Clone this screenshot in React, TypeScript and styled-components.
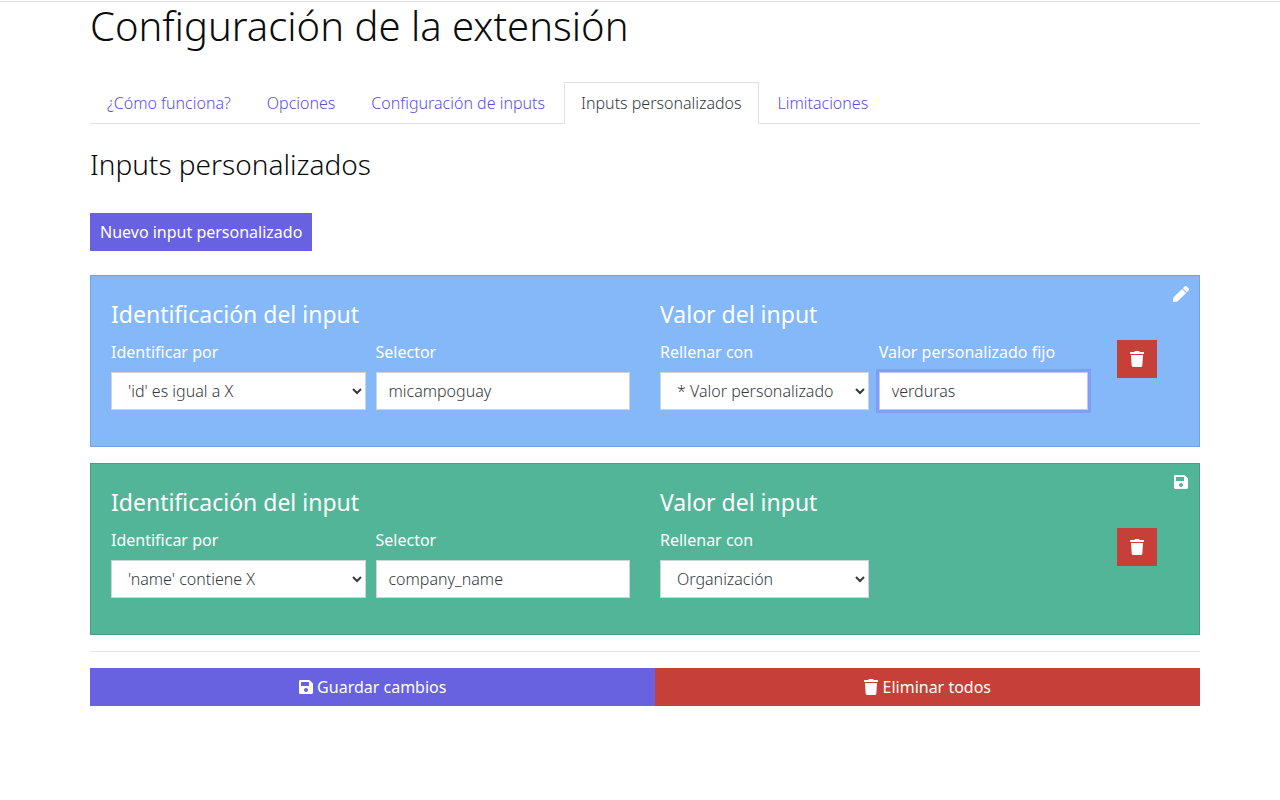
import React from "react";
import styled, { createGlobalStyle, css } from "styled-components";
import { FaPen, FaSave, FaTrash } from "react-icons/fa";

const GlobalStyle = createGlobalStyle`
  *, *::before, *::after {
    box-sizing: border-box;
  }
  body {
    margin: 0;
    background: #fff;
    color: #0b0c0d;
    font-family: "Noto Sans", sans-serif;
    font-size: 16px;
    font-weight: 300;
    line-height: 24px;
  }
  button, input, select {
    font: inherit;
  }
`;

const Page = styled.div`
  margin-top: 1px;
  border-top: 1px solid #dee2e6;
`;

const Container = styled.main`
  padding: 0 80px 40px 90px;
`;

const PageTitle = styled.h1`
  margin: 0 0 32px;
  font-size: 40px;
  font-weight: 300;
  line-height: 48px;
`;

const Tabs = styled.nav`
  display: flex;
  gap: 2px;
  border-bottom: 1px solid #dee2e6;
`;

const Tab = styled.a<{ $active?: boolean }>`
  margin-bottom: -1px;
  padding: 8px 16px;
  border: 1px solid transparent;
  color: #5a4fe0;
  text-decoration: none;
  ${({ $active }) =>
    $active &&
    css`
      border-color: #dee2e6 #dee2e6 #fff;
      background: #fff;
      color: #343a40;
    `}
`;

const SectionTitle = styled.h2`
  margin: 24px 0 32px;
  font-size: 28px;
  font-weight: 300;
  line-height: 33px;
`;

const Button = styled.button<{ $tone: "primary" | "danger" }>`
  padding: 7px 10px;
  border: 0;
  background: ${({ $tone }) => ($tone === "primary" ? "#6861e0" : "#c63f38")};
  color: #fff;
  font-weight: 400;
  line-height: 24px;
  cursor: pointer;

  svg {
    width: 14px;
    height: 16px;
    vertical-align: -2px;
  }
`;

const RemoveButton = styled(Button)`
  width: 40px;
  padding: 7px 0;
`;

const CardList = styled.div`
  display: grid;
  gap: 16px;
  margin-top: 24px;
`;

const Card = styled.form<{ $color: string }>`
  position: relative;
  padding: 20px 20px 24px;
  border: 1px solid rgba(0, 0, 0, 0.125);
  background: ${({ $color }) => $color};
  color: #fff;
  font-weight: 400;
`;

const CardAction = styled.button`
  position: absolute;
  top: 10px;
  right: 10px;
  display: flex;
  padding: 0;
  border: 0;
  background: none;
  color: #fff;
  cursor: pointer;
`;

const CardGrid = styled.div`
  display: grid;
  grid-template-columns: 6fr 5fr 1fr;
  margin: 0 -15px;
`;

const Group = styled.fieldset`
  min-width: 0;
  margin: 0;
  padding: 0 15px 12px;
  border: 0;
`;

const GroupTitle = styled.legend`
  padding: 4px 0 11px;
  font-size: 23px;
  line-height: 29px;
`;

const Fields = styled.div`
  display: grid;
  grid-template-columns: 1fr 1fr;
  gap: 10px;
`;

const Field = styled.div`
  min-width: 0;
`;

const Label = styled.label`
  display: block;
  margin-bottom: 8px;
`;

const controlStyle = css`
  display: block;
  width: 100%;
  height: 38px;
  padding: 6px 12px;
  border: 1px solid #ced4da;
  border-radius: 0;
  background: #fff;
  color: #343a40;
  font-weight: 300;
  outline: 0;
`;

const Select = styled.select`
  ${controlStyle}
`;

const TextInput = styled.input<{ $focused?: boolean }>`
  ${controlStyle}
  ${({ $focused }) =>
    $focused &&
    css`
      border-color: #c9c4f5;
      box-shadow: 0 0 0 3px #7d9ff5;
    `}
`;

const RemoveCell = styled.div`
  display: flex;
  align-items: center;
  padding: 0 14px;
`;

const Divider = styled.hr`
  margin: 16px 0;
  border: 0;
  border-top: 1px solid #e5e5e5;
`;

const Actions = styled.div`
  display: flex;

  & > button {
    flex: 1 1 auto;
  }
`;

const tabs = ["¿Cómo funciona?", "Opciones", "Configuración de inputs", "Inputs personalizados", "Limitaciones"];

type CustomInput = {
  id: string;
  color: string;
  editing: boolean;
  match: string;
  selector: string;
  fill: string;
  fixed?: string;
};

const items: CustomInput[] = [
  { id: "a", color: "#84b8f9", editing: false, match: "'id' es igual a X", selector: "micampoguay", fill: "* Valor personalizado", fixed: "verduras" },
  { id: "b", color: "#53b597", editing: true, match: "'name' contiene X", selector: "company_name", fill: "Organización" },
];

function CustomInputCard({ item }: { item: CustomInput }) {
  const { id } = item;
  return (
    <Card $color={item.color}>
      <CardAction type="button" aria-label={item.editing ? "Guardar" : "Editar"}>
        {item.editing ? <FaSave /> : <FaPen />}
      </CardAction>
      <CardGrid>
        <Group>
          <GroupTitle>Identificación del input</GroupTitle>
          <Fields>
            <Field>
              <Label htmlFor={`match-${id}`}>Identificar por</Label>
              <Select id={`match-${id}`}>
                <option>{item.match}</option>
              </Select>
            </Field>
            <Field>
              <Label htmlFor={`selector-${id}`}>Selector</Label>
              <TextInput id={`selector-${id}`} type="text" defaultValue={item.selector} />
            </Field>
          </Fields>
        </Group>
        <Group>
          <GroupTitle>Valor del input</GroupTitle>
          <Fields>
            <Field>
              <Label htmlFor={`fill-${id}`}>Rellenar con</Label>
              <Select id={`fill-${id}`}>
                <option>{item.fill}</option>
              </Select>
            </Field>
            {item.fixed && (
              <Field>
                <Label htmlFor={`fixed-${id}`}>Valor personalizado fijo</Label>
                <TextInput id={`fixed-${id}`} type="text" defaultValue={item.fixed} $focused />
              </Field>
            )}
          </Fields>
        </Group>
        <RemoveCell>
          <RemoveButton type="button" $tone="danger" aria-label="Eliminar">
            <FaTrash />
          </RemoveButton>
        </RemoveCell>
      </CardGrid>
    </Card>
  );
}

export default function App() {
  return (
    <Page>
      <GlobalStyle />
      <Container>
        <PageTitle>Configuración de la extensión</PageTitle>
        <Tabs>
          {tabs.map((tab) => (
            <Tab key={tab} href="#" $active={tab === "Inputs personalizados"}>
              {tab}
            </Tab>
          ))}
        </Tabs>
        <SectionTitle>Inputs personalizados</SectionTitle>
        <Button type="button" $tone="primary">
          Nuevo input personalizado
        </Button>
        <CardList>
          {items.map((item) => (
            <CustomInputCard key={item.id} item={item} />
          ))}
        </CardList>
        <Divider />
        <Actions>
          <Button type="button" $tone="primary">
            <FaSave /> Guardar cambios
          </Button>
          <Button type="button" $tone="danger">
            <FaTrash /> Eliminar todos
          </Button>
        </Actions>
      </Container>
    </Page>
  );
}
